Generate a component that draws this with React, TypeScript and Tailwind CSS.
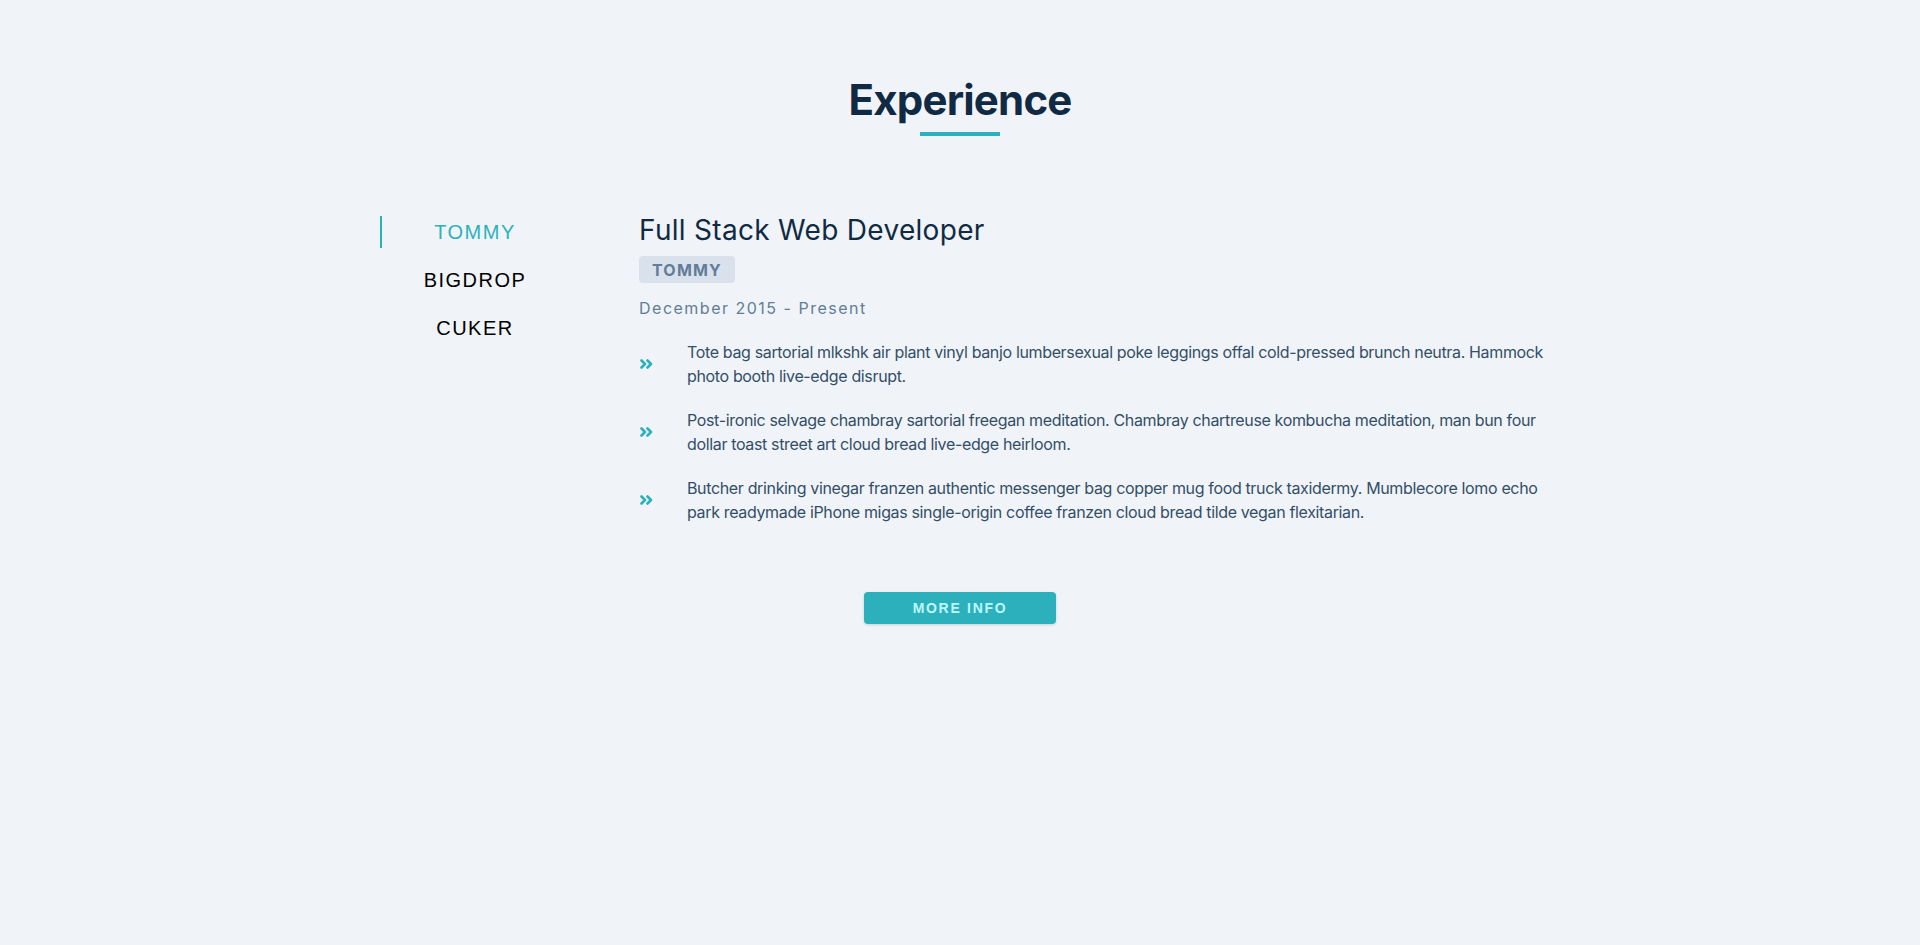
import React, { useState } from 'react';

type Job = {
  company: string;
  title: string;
  range: string;
  duties: string[];
};

const jobs: Job[] = [
  {
    company: 'Tommy',
    title: 'Full Stack Web Developer',
    range: 'December 2015 - Present',
    duties: [
      'Tote bag sartorial mlkshk air plant vinyl banjo lumbersexual poke leggings offal cold-pressed brunch neutra. Hammock photo booth live-edge disrupt.',
      'Post-ironic selvage chambray sartorial freegan meditation. Chambray chartreuse kombucha meditation, man bun four dollar toast street art cloud bread live-edge heirloom.',
      'Butcher drinking vinegar franzen authentic messenger bag copper mug food truck taxidermy. Mumblecore lomo echo park readymade iPhone migas single-origin coffee franzen cloud bread tilde vegan flexitarian.',
    ],
  },
  {
    company: 'Bigdrop',
    title: 'Front-End Engineer',
    range: 'May 2015 - December 2015',
    duties: [
      'Hashtag drinking vinegar scenester mumblecore snackwave four dollar toast, lumbersexual XOXO. Cardigan church-key pabst, biodiesel vexillologist viral squid.',
      'Franzen af pitchfork, mumblecore try-hard kogi XOXO roof party la croix cardigan neutra retro tattooed copper mug.',
    ],
  },
  {
    company: 'Cuker',
    title: 'Engineering Intern',
    range: 'May 2014 - September 2015',
    duties: [
      'I am baby fingerstache typewriter, iceland mixtape vinyl pinterest selvage plaid messenger bag.',
      'Bushwick sustainable poke glossier vexillologist, man bun chartreuse meh butcher echo park.',
    ],
  },
];

const DoubleChevron: React.FC = () => (
  <svg width="13" height="10" viewBox="0 0 13 10" fill="none" stroke="#2CB1BC" strokeWidth="2.6" strokeLinecap="round" strokeLinejoin="round">
    <path d="M1.5 1.5 L5 5 L1.5 8.5" />
    <path d="M7.5 1.5 L11 5 L7.5 8.5" />
  </svg>
);

const App: React.FC = () => {
  const [active, setActive] = useState(0);
  const job = jobs[active];

  return (
    <div className="min-h-screen w-full bg-[#f0f4f8] pt-[75px] font-['Inter',sans-serif]">
      <section>
        <div className="flex flex-col items-center">
          <h2 className="text-[42px] leading-[50px] font-bold tracking-[-0.8px] text-[#102a43]">Experience</h2>
          <div className="mt-[7px] h-[4px] w-[80px] bg-[#2CB1BC]" />
        </div>

        <div className="mx-auto mt-[77px] flex w-[1170px] pl-[5px]">
          <div className="mt-[3px] flex w-[188px] shrink-0 flex-col gap-4">
            {jobs.map((j, i) => (
              <button
                key={j.company}
                onClick={() => setActive(i)}
                className={`h-[32px] border-l-2 text-center font-['Liberation_Sans',Arial,sans-serif] text-[20px] uppercase tracking-[1.5px] ${
                  i === active ? 'border-[#2CB1BC] text-[#2CB1BC]' : 'border-transparent text-black'
                }`}
              >
                {j.company}
              </button>
            ))}
          </div>

          <div className="ml-[71px] flex-1">
            <h3 className="text-[28px] leading-[34px] font-normal text-[#102a43] tracking-[0.3px]">{job.title}</h3>
            <div className="mt-[9px] inline-flex h-[27px] items-center rounded-[4px] bg-[#d9e2ec] px-[13px] text-[16px] font-bold uppercase tracking-[1.2px] text-[#627d98]">
              {job.company}
            </div>
            <p className="mt-[13px] text-[16px] leading-[24px] tracking-[1.5px] text-[#627d98]">{job.range}</p>

            <div className="mt-[20px] flex flex-col gap-5">
              {job.duties.map((d) => (
                <div key={d} className="flex items-center">
                  <div className="w-[48px] shrink-0 pl-[1px]">
                    <DoubleChevron />
                  </div>
                  <p className="flex-1 text-[16px] leading-[24px] tracking-[-0.35px] text-[#334e68]">{d}</p>
                </div>
              ))}
            </div>
          </div>
        </div>

        <div className="mt-[68px] flex justify-center">
          <button className="h-[32px] w-[192px] rounded-[4px] bg-[#2CB1BC] font-['Liberation_Sans',Arial,sans-serif] text-[14px] font-bold uppercase tracking-[1.7px] text-[#bef8fd] shadow-[0_1px_3px_rgba(0,0,0,0.15)]">
            More Info
          </button>
        </div>
      </section>
    </div>
  );
};

export default App;
